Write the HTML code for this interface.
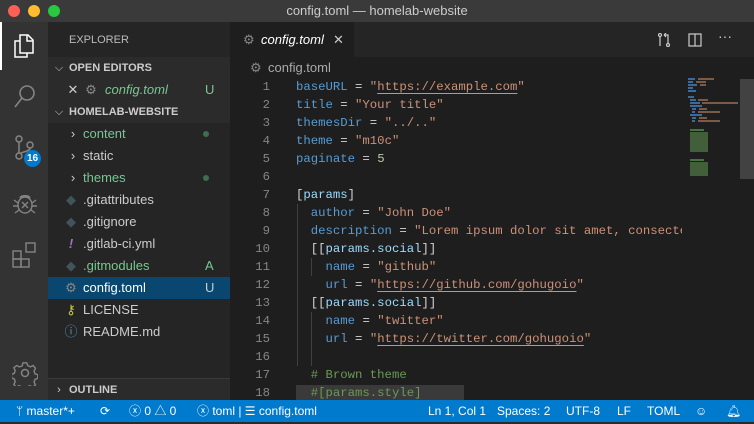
<!DOCTYPE html>
<html><head><style>
*{margin:0;padding:0;box-sizing:border-box}
body{width:754px;height:424px;background:#1e1e1e;position:relative;overflow:hidden;font-family:"Liberation Sans",sans-serif;font-size:13px;color:#ccc}
.abs{position:absolute}
#title{left:0;top:0;width:754px;height:22px;background:#3a3a3a;color:#ccc;text-align:center;line-height:22px;font-size:13px}
.dot{position:absolute;top:5px;width:12px;height:12px;border-radius:6px}
#act{left:0;top:22px;width:48px;height:378px;background:#333}
#side{left:48px;top:22px;width:182px;height:378px;background:#252526}
.row{position:absolute;left:0;width:182px;height:22px;line-height:22px;font-size:13px;white-space:nowrap}
.hdr{font-weight:bold;font-size:11px;color:#ccc}
.g{color:#73c991}
.ic{position:absolute;left:16px;top:0;width:14px;text-align:center}
.code{position:absolute;font-family:"Liberation Mono",monospace;font-size:12.3px;white-space:pre;line-height:18px}
.k{color:#569cd6}.s{color:#ce9178}.n{color:#b5cea8}.t{color:#9cdcfe}.c{color:#6a9955}.p{color:#d4d4d4}
.u{text-decoration:underline;text-underline-offset:3px}
#status{left:0;top:400px;width:754px;height:22px;background:#007acc;color:#fff;font-size:12px;line-height:22px}
#status span{position:absolute;top:0}
</style></head><body>
<div id="title" class="abs">config.toml — homelab-website</div>
<div class="dot" style="left:8px;background:#fe5f57"></div>
<div class="dot" style="left:28px;background:#febc2e"></div>
<div class="dot" style="left:48px;background:#28c840"></div>

<div id="act" class="abs">
 <div class="abs" style="left:0;top:0;width:2px;height:48px;background:#fff"></div>
 <svg class="abs" style="left:12px;top:10px" width="24" height="28" viewBox="0 0 24 28" fill="none" stroke="#fff" stroke-width="1.5"><path d="M8 3h8l5 5v13H8z"/><path d="M15 3v6h6"/><path d="M8 9H3v16h12v-4"/></svg>
 <svg class="abs" style="left:12px;top:61px" width="26" height="28" fill="none" stroke="#858585" stroke-width="1.6"><circle cx="15" cy="10" r="7"/><path d="M10 15L3 24"/></svg>
 <svg class="abs" style="left:14px;top:113px" width="22" height="26" fill="none" stroke="#858585" stroke-width="1.5"><circle cx="5" cy="4" r="3"/><circle cx="16" cy="10" r="3"/><circle cx="5" cy="21" r="3"/><path d="M5 7v11M16 13c0 4-8 3-10 6"/></svg>
 <div class="abs" style="left:24px;top:128px;width:17px;height:17px;border-radius:9px;background:#007acc;color:#fff;font-size:10px;font-weight:bold;text-align:center;line-height:17px">16</div>
 <svg class="abs" style="left:12px;top:168px" width="26" height="26" fill="none" stroke="#858585" stroke-width="1.4"><ellipse cx="13" cy="15" rx="7" ry="8"/><path d="M8 8c1-3 9-3 10 0M2 10l4 3M24 10l-4 3M1 16h5M25 16h-5M3 23l4-3M23 23l-4-3M10 12l6 6M16 12l-6 6"/></svg>
 <svg class="abs" style="left:12px;top:220px" width="26" height="26" fill="none" stroke="#858585" stroke-width="1.4"><rect x="1" y="9" width="8" height="8"/><rect x="1" y="17" width="8" height="8"/><rect x="9" y="17" width="8" height="8"/><rect x="14" y="1" width="9" height="9"/></svg>
 <svg class="abs" style="left:12px;top:338px" width="26" height="26" fill="none" stroke="#858585" stroke-width="1.5"><circle cx="13" cy="13" r="3.5"/><path d="M11 2h4l1 3 3 1.5 3-1.5 2.5 3-1.5 3 1 3 3 1v4l-3 1-1 3 1.5 3-3 2.5-3-1.5-3 1-1 3h-4l-1-3-3-1-3 1.5-2.5-3 1.5-3-1-3-3-1v-4l3-1 1-3-1.5-3 3-2.5 3 1.5 3-1z" transform="scale(.92) translate(1,1)"/></svg>
</div>

<div id="side" class="abs">
 <div class="row" style="top:7px;left:21px;font-size:11px;color:#bbb">EXPLORER</div>
 <div class="row hdr" style="top:35px;background:#2b2b2c"><span class="ic" style="left:4px;font-weight:normal;color:#ccc">⌵</span><span style="position:absolute;left:21px">OPEN EDITORS</span></div>
 <div class="row" style="top:57px;background:#2b2b2c"><span class="ic" style="left:18px;color:#ccc">✕</span><span class="ic" style="left:36px;color:#888">⚙</span><span class="g" style="position:absolute;left:57px;font-style:italic">config.toml</span><span class="g" style="position:absolute;left:157px">U</span></div>
 <div class="row hdr" style="top:79px;background:#2b2b2c"><span class="ic" style="left:4px;font-weight:normal">⌵</span><span style="position:absolute;left:21px">HOMELAB-WEBSITE</span></div>
 <div class="row" style="top:101px"><span class="ic" style="left:18px">›</span><span class="g" style="position:absolute;left:35px">content</span><span style="position:absolute;left:155px;top:8px;width:6px;height:6px;border-radius:3px;background:#3f6d4e"></span></div>
 <div class="row" style="top:123px"><span class="ic" style="left:18px">›</span><span style="position:absolute;left:35px">static</span></div>
 <div class="row" style="top:145px"><span class="ic" style="left:18px">›</span><span class="g" style="position:absolute;left:35px">themes</span><span style="position:absolute;left:155px;top:8px;width:6px;height:6px;border-radius:3px;background:#3f6d4e"></span></div>
 <div class="row" style="top:167px"><span class="ic" style="left:16px;color:#41535b">◆</span><span style="position:absolute;left:35px">.gitattributes</span></div>
 <div class="row" style="top:189px"><span class="ic" style="left:16px;color:#41535b">◆</span><span style="position:absolute;left:35px">.gitignore</span></div>
 <div class="row" style="top:211px"><span class="ic" style="left:16px;color:#a074c4;font-style:italic;font-weight:bold">!</span><span style="position:absolute;left:35px">.gitlab-ci.yml</span></div>
 <div class="row" style="top:233px"><span class="ic" style="left:16px;color:#41535b">◆</span><span class="g" style="position:absolute;left:35px">.gitmodules</span><span class="g" style="position:absolute;left:157px">A</span></div>
 <div class="row" style="top:255px;background:#094771;color:#fff"><span class="ic" style="left:16px;color:#888">⚙</span><span style="position:absolute;left:35px">config.toml</span><span style="position:absolute;left:157px;color:#ccc">U</span></div>
 <div class="row" style="top:277px"><span class="ic" style="left:16px;color:#cbcb41">⚷</span><span style="position:absolute;left:35px">LICENSE</span></div>
 <div class="row" style="top:299px"><span class="ic" style="left:16px;color:#519aba">ⓘ</span><span style="position:absolute;left:35px">README.md</span></div>
 <div class="row hdr" style="top:356px;background:#2b2b2c;border-top:1px solid #3a3a3a"><span class="ic" style="left:4px;font-weight:normal">›</span><span style="position:absolute;left:21px">OUTLINE</span></div>
</div>

<div class="abs" style="left:230px;top:22px;width:524px;height:35px;background:#252526"></div>
<div class="abs" style="left:230px;top:22px;width:124px;height:35px;background:#1e1e1e;color:#fff;line-height:35px">
 <span class="abs" style="left:13px;color:#888">⚙</span><span class="abs" style="left:31px;font-style:italic">config.toml</span><span class="abs" style="left:103px;color:#ccc">✕</span></div>
<svg class="abs" style="left:657px;top:33px" width="14" height="14" fill="none" stroke="#ccc" stroke-width="1.2"><circle cx="3" cy="2" r="1.5"/><circle cx="11" cy="12" r="1.5"/><path d="M3 4v9M11 10V2H7M7 2l2-2M7 2l2 2"/></svg>
<svg class="abs" style="left:688px;top:33px" width="14" height="14" fill="none" stroke="#ccc" stroke-width="1.2"><rect x="1" y="1" width="12" height="12"/><path d="M7 1v12"/></svg>
<div class="abs" style="left:718px;top:28px;color:#ccc;font-size:14px">···</div>
<div class="abs" style="left:250px;top:60px;color:#888;font-size:13px">⚙</div>
<div class="abs" style="left:268px;top:60px;color:#aaa;font-size:13px">config.toml</div>

<div class="code" style="left:240px;top:78px;width:30px;text-align:right;color:#858585">1
2
3
4
5
6
7
8
9
10
11
12
13
14
15
16
17
18</div>
<div class="abs" style="left:296px;top:385px;width:168px;height:15px;background:#3a3a3a"></div>
<div class="abs" style="left:297px;top:204px;width:1px;height:162px;background:#404040"></div>
<div class="abs" style="left:311px;top:258px;width:1px;height:18px;background:#404040"></div>
<div class="abs" style="left:311px;top:312px;width:1px;height:54px;background:#404040"></div>
<div class="code" style="left:296px;top:78px;width:386px;overflow:hidden;color:#d4d4d4"><span class="k">baseURL</span> = <span class="s">"<span class="u">https://example.com</span>"</span>
<span class="k">title</span> = <span class="s">"Your title"</span>
<span class="k">themesDir</span> = <span class="s">"../.."</span>
<span class="k">theme</span> = <span class="s">"m10c"</span>
<span class="k">paginate</span> = <span class="n">5</span>

[<span class="t">params</span>]
  <span class="k">author</span> = <span class="s">"John Doe"</span>
  <span class="k">description</span> = <span class="s">"Lorem ipsum dolor sit amet, consectetur"</span>
  [[<span class="t">params.social</span>]]
    <span class="k">name</span> = <span class="s">"github"</span>
    <span class="k">url</span> = <span class="s">"<span class="u">https://github.com/gohugoio</span>"</span>
  [[<span class="t">params.social</span>]]
    <span class="k">name</span> = <span class="s">"twitter"</span>
    <span class="k">url</span> = <span class="s">"<span class="u">https://twitter.com/gohugoio</span>"</span>

  <span class="c"># Brown theme</span>
  <span class="c">#[params.style]</span></div>

<svg class="abs" style="left:688px;top:78px" width="52" height="110">
<g fill="#3b6a9c"><rect x="0" y="0" width="7" height="2"/><rect x="0" y="3" width="5" height="2"/><rect x="0" y="6" width="9" height="2"/><rect x="0" y="9" width="5" height="2"/><rect x="0" y="12" width="8" height="2"/><rect x="0" y="18" width="6" height="2"/><rect x="2" y="21" width="6" height="2"/><rect x="2" y="24" width="10" height="2"/><rect x="2" y="27" width="12" height="2"/><rect x="4" y="30" width="4" height="2"/><rect x="4" y="33" width="3" height="2"/><rect x="2" y="36" width="12" height="2"/><rect x="4" y="39" width="4" height="2"/><rect x="4" y="42" width="3" height="2"/></g>
<g fill="#7a5a48"><rect x="10" y="0" width="16" height="2"/><rect x="8" y="3" width="10" height="2"/><rect x="12" y="6" width="6" height="2"/><rect x="10" y="21" width="10" height="2"/><rect x="14" y="24" width="36" height="2"/><rect x="11" y="30" width="8" height="2"/><rect x="10" y="33" width="22" height="2"/><rect x="11" y="39" width="8" height="2"/><rect x="10" y="42" width="22" height="2"/></g>
<g fill="#4a7040"><rect x="2" y="51" width="14" height="2"/><rect x="2" y="54" width="18" height="20" opacity=".8"/><rect x="2" y="81" width="14" height="2"/><rect x="2" y="84" width="18" height="14" opacity=".8"/></g>
</svg>
<div class="abs" style="left:740px;top:79px;width:14px;height:100px;background:#424242"></div>

<div id="status" class="abs">
 <span style="left:16px">ᛘ master*+</span>
 <span style="left:100px">⟳</span>
 <span style="left:129px">ⓧ 0 △ 0</span>
 <span style="left:197px">ⓧ toml | ☰ config.toml</span>
 <span style="left:428px">Ln 1, Col 1</span>
 <span style="left:497px">Spaces: 2</span>
 <span style="left:566px">UTF-8</span>
 <span style="left:617px">LF</span>
 <span style="left:647px">TOML</span>
 <span style="left:695px">☺</span>
 <span style="left:726px">🔔︎</span>
</div>
<div class="abs" style="left:0;top:422px;width:754px;height:2px;background:#2a2a2a"></div>
</body></html>
